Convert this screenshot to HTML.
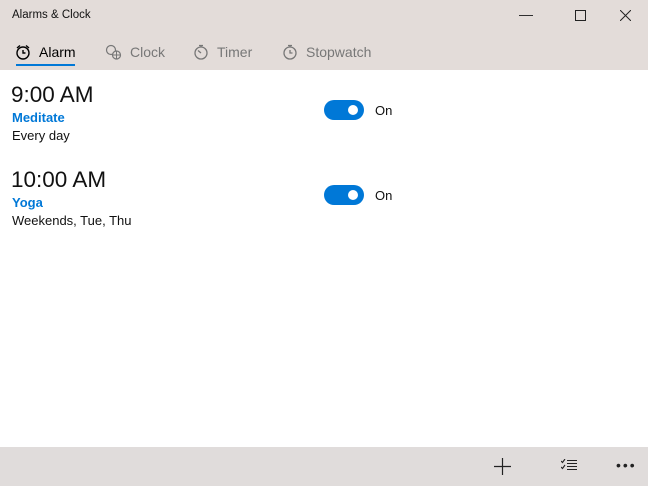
<!DOCTYPE html>
<html><head><style>
*{margin:0;padding:0;box-sizing:border-box}
body{width:648px;height:486px;overflow:hidden;background:#fff;font-family:"Liberation Sans",sans-serif;position:relative;color:#000}
.hdr{position:absolute;left:0;top:0;width:648px;height:70px;background:#e3dcd9}
.title{position:absolute;left:12px;top:9px;font-size:11.5px;color:#111}
.ctl{position:absolute;top:6px;font-size:14px;color:#222}
.tab{position:absolute;top:44px;font-size:14px;color:#777;display:flex;align-items:center;gap:8px}
.tab.act{color:#000}
.ul{position:absolute;left:16px;top:64px;width:59px;height:2px;background:#0078d7}
.time{position:absolute;left:11px;font-size:22.5px;color:#111}
.name{position:absolute;left:12px;font-size:13px;font-weight:bold;color:#0078d7}
.sub{position:absolute;left:12px;font-size:13px;color:#111}
.tg{position:absolute;left:324px;width:40px;height:20px;border-radius:10px;background:#0078d7}
.tg::after{content:"";position:absolute;right:6px;top:5px;width:10px;height:10px;border-radius:50%;background:#fff}
.on{position:absolute;left:375px;font-size:13px;color:#111}
.bot{position:absolute;left:0;top:447px;width:648px;height:39px;background:#e0dcdb}
</style></head><body>
<div class="hdr">
<div class="title">Alarms &amp; Clock</div>
<div class="ctl" style="left:519px">&#8212;</div>
<svg style="position:absolute;left:575px;top:10px" width="11" height="11"><rect x=".5" y=".5" width="10" height="10" fill="none" stroke="#222"/></svg>
<svg style="position:absolute;left:620px;top:10px" width="11" height="11"><path d="M0 0L11 11M11 0L0 11" stroke="#222"/></svg>
<div class="tab act" style="left:15px"><svg width="16" height="16" viewBox="0 0 16 16"><circle cx="8" cy="9" r="6" fill="none" stroke="#000" stroke-width="1.4"/><path d="M2 4L5 1.5M14 4L11 1.5M8 6v3h2.5" fill="none" stroke="#000" stroke-width="1.4"/></svg>Alarm</div>
<div class="tab" style="left:105px"><svg width="17" height="16" viewBox="0 0 17 16"><circle cx="6" cy="6" r="4.5" fill="none" stroke="#777" stroke-width="1.2"/><circle cx="11.5" cy="11" r="4" fill="#e3dcd9" stroke="#777" stroke-width="1.2"/><path d="M7.5 11h8M11.5 7v8" stroke="#777"/></svg>Clock</div>
<div class="tab" style="left:193px"><svg width="16" height="16" viewBox="0 0 16 16"><circle cx="8" cy="9" r="6" fill="none" stroke="#777" stroke-width="1.3"/><path d="M6 1.5h4M8 2v1.5M8 9L5 6.5" fill="none" stroke="#777" stroke-width="1.3"/></svg>Timer</div>
<div class="tab" style="left:282px"><svg width="16" height="16" viewBox="0 0 16 16"><circle cx="8" cy="9" r="6" fill="none" stroke="#777" stroke-width="1.3"/><path d="M6 1.5h4M8 2v1.5M8 6v3h2.5" fill="none" stroke="#777" stroke-width="1.3"/></svg>Stopwatch</div>
<div class="ul"></div>
</div>
<div class="time" style="top:82px">9:00 AM</div>
<div class="name" style="top:110px">Meditate</div>
<div class="sub" style="top:128px">Every day</div>
<div class="tg" style="top:100px"></div><div class="on" style="top:103px">On</div>
<div class="time" style="top:167px">10:00 AM</div>
<div class="name" style="top:195px">Yoga</div>
<div class="sub" style="top:213px">Weekends, Tue, Thu</div>
<div class="tg" style="top:185px"></div><div class="on" style="top:188px">On</div>
<div class="bot">
<svg style="position:absolute;left:494px;top:11px" width="17" height="17"><path d="M8.5 0v17M0 8.5h17" stroke="#222" stroke-width="1.2"/></svg>
<svg style="position:absolute;left:561px;top:12px" width="16" height="13"><path d="M0 2l1.5 1.5L4 0M0 8l1.5 1.5L4 6M6 1.5h10M6 4.5h10M6 7.5h10M6 10.5h10" fill="none" stroke="#222" stroke-width="1.1"/></svg>
<div style="position:absolute;left:616px;top:10px;font-size:14px;letter-spacing:2px;color:#222">&#8226;&#8226;&#8226;</div>
</div>
</body></html>
